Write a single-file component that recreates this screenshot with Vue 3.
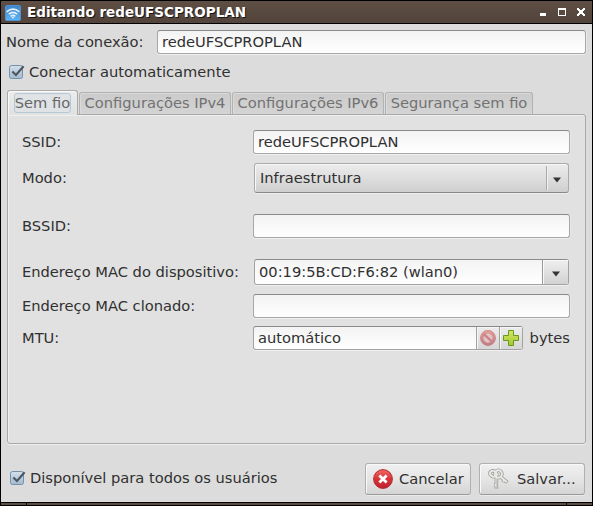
<script setup>
import { ref } from 'vue'

const title = 'Editando redeUFSCPROPLAN'
const tabs = [
  { id: 'wifi', label: 'Sem fio' },
  { id: 'ipv4', label: 'Configurações IPv4' },
  { id: 'ipv6', label: 'Configurações IPv6' },
  { id: 'sec', label: 'Segurança sem fio' },
]
const active = ref('wifi')
const autoConnect = ref(true)
const allUsers = ref(true)
</script>

<template>
  <div class="window">
    <header class="titlebar">
      <svg class="app-icon" width="16" height="16" viewBox="0 0 16 16">
        <defs>
          <linearGradient id="sky" x1="0" y1="0" x2="0" y2="1">
            <stop offset="0" stop-color="#3f83c8" />
            <stop offset="1" stop-color="#5eb4f4" />
          </linearGradient>
        </defs>
        <rect x="0.5" y="0.5" width="15" height="15" rx="1" fill="url(#sky)" stroke="#4b93d6" />
        <g fill="none" stroke="#e3f0fb" stroke-width="1.7">
          <path d="M1.6 6.8Q8 1.6 14.4 6.8" />
          <path d="M3.8 9.2Q8 5.6 12.2 9.2" />
          <path d="M5.7 11.3Q8 9.3 10.3 11.3" />
        </g>
        <path d="M6.6 12.2h2.8L8 13.8z" fill="#fff" />
      </svg>
      <h1 class="title">{{ title }}</h1>
      <svg class="controls" width="46" height="9" viewBox="0 0 46 9" shape-rendering="crispEdges">
        <rect x="0" y="5" width="6" height="3" fill="#fff" />
        <path d="M18 0h8v8h-8zM19 2v5h6V2z" fill="#fff" fill-rule="evenodd" />
        <path d="M37 0h2v1h1v1h2V1h1V0h2v2h-1v1h-1v2h1v1h1v2h-2V7h-1V6h-2v1h-1v1h-2V6h1V5h1V3h-1V2h-1z" fill="#fff" />
      </svg>
    </header>

    <main class="body">
      <div class="name-row">
        <span class="name-label">Nome da conexão:</span>
        <div class="entry name-entry">redeUFSCPROPLAN</div>
      </div>

      <div class="check auto" @click="autoConnect = !autoConnect">
        <svg class="box" width="16" height="16" viewBox="0 0 16 16">
          <defs>
            <linearGradient id="boxfill" x1="0" y1="0" x2="0" y2="1">
              <stop offset="0" stop-color="#d3e0ec" />
              <stop offset="1" stop-color="#a4bace" />
            </linearGradient>
          </defs>
          <rect x="0.5" y="1.5" width="13" height="13" rx="2" fill="url(#boxfill)" stroke="#7391aa" />
          <path v-if="autoConnect" d="M3.3 7.4L7 11L14.6 2.2" fill="none" stroke="#4b5660" stroke-width="2.1" />
        </svg>
        <span>Conectar automaticamente</span>
      </div>

      <nav class="tabs">
        <div
          v-for="t in tabs"
          :key="t.id"
          class="tab"
          :class="[t.id, { active: t.id === active }]"
          @click="active = t.id"
        >
          <span class="tab-text">{{ t.label }}</span>
        </div>
      </nav>

      <section class="pane">
        <span class="label">SSID:</span>
        <div class="entry">redeUFSCPROPLAN</div>

        <span class="label">Modo:</span>
        <div class="combo">
          <span class="combo-value">Infraestrutura</span>
          <span class="combo-arrow">
            <svg width="8" height="6" viewBox="0 0 8 6"><path d="M0 .5h8L4 5.5z" fill="#333" /></svg>
          </span>
        </div>

        <span class="label">BSSID:</span>
        <div class="entry"></div>

        <span class="label">Endereço MAC do dispositivo:</span>
        <div class="combo-entry">
          <span class="combo-text">00:19:5B:CD:F6:82 (wlan0)</span>
          <span class="drop">
            <svg width="8" height="6" viewBox="0 0 8 6"><path d="M0 .5h8L4 5.5z" fill="#333" /></svg>
          </span>
        </div>

        <span class="label">Endereço MAC clonado:</span>
        <div class="entry"></div>

        <span class="label">MTU:</span>
        <div class="mtu">
          <div class="spin">
            <span class="spin-text">automático</span>
            <span class="step">
              <svg width="16" height="16" viewBox="0 0 16 16">
                <defs>
                  <linearGradient id="ban" x1="0" y1="0" x2="0" y2="1">
                    <stop offset="0" stop-color="#e59a96" />
                    <stop offset="1" stop-color="#c07f8b" />
                  </linearGradient>
                </defs>
                <circle cx="8" cy="8" r="6.3" fill="#e0c6c6" stroke="#c5807f" stroke-width="3.2" />
                <circle cx="8" cy="8" r="6.3" fill="none" stroke="url(#ban)" stroke-width="2.2" />
                <path d="M3.8 4.2L12.2 11.8" stroke="#cc8487" stroke-width="2.4" />
              </svg>
            </span>
            <span class="step">
              <svg width="16" height="16" viewBox="0 0 16 16">
                <defs>
                  <linearGradient id="plus" x1="0" y1="0" x2="0" y2="1">
                    <stop offset="0" stop-color="#d2e668" />
                    <stop offset="1" stop-color="#a4c92c" />
                  </linearGradient>
                </defs>
                <path d="M5.5 .5h5v5h5v5h-5v5h-5v-5h-5v-5h5z" fill="url(#plus)" stroke="#679a1c" />
              </svg>
            </span>
          </div>
          <span class="unit">bytes</span>
        </div>
      </section>

      <footer class="actions">
        <div class="check" @click="allUsers = !allUsers">
          <svg class="box" width="16" height="16" viewBox="0 0 16 16">
            <rect x="0.5" y="1.5" width="13" height="13" rx="2" fill="url(#boxfill)" stroke="#7391aa" />
            <path v-if="allUsers" d="M3.3 7.4L7 11L14.6 2.2" fill="none" stroke="#4b5660" stroke-width="2.1" />
          </svg>
          <span>Disponível para todos os usuários</span>
        </div>
        <div class="buttons">
          <div class="button">
            <svg width="20" height="20" viewBox="0 0 20 20">
              <defs>
                <linearGradient id="stop" x1="0" y1="0" x2="0" y2="1">
                  <stop offset="0" stop-color="#ef6a66" />
                  <stop offset="0.5" stop-color="#d93338" />
                  <stop offset="1" stop-color="#bd2030" />
                </linearGradient>
              </defs>
              <circle cx="10" cy="10" r="9.4" fill="url(#stop)" stroke="#b52a31" stroke-width="1" />
              <path d="M6.4 6.4l7.2 7.2M13.6 6.4l-7.2 7.2" stroke="#fff" stroke-width="2.8" />
            </svg>
            <span class="cancel-text">Cancelar</span>
          </div>
          <div class="button save">
            <svg width="22" height="22" viewBox="0 0 22 22" fill="none">
              <g stroke="#a0a19d" stroke-width="3.6">
                <ellipse cx="6.4" cy="5.8" rx="3.6" ry="2.8" transform="rotate(25 6.4 5.8)" />
                <path d="M13.5 8.8L20.4 14.4M16.8 12.4l-1 1.8" />
                <path d="M9.4 10V20.6M9.4 17.2H7" />
                <ellipse cx="11.4" cy="6" rx="3.5" ry="3.7" />
              </g>
              <g stroke="#eaebe7" stroke-width="1.9">
                <ellipse cx="6.4" cy="5.8" rx="3.6" ry="2.8" transform="rotate(25 6.4 5.8)" />
                <path d="M13.5 8.8L19.8 13.9M16.8 12.4l-.7 1.2" />
                <path d="M9.4 10V19.8M9.4 17.2H7.6" />
                <ellipse cx="11.4" cy="6" rx="3.5" ry="3.7" />
              </g>
              <path d="M9.8 10.5V20" stroke="#a9aaa6" stroke-width=".7" />
            </svg>
            <span>Salvar...</span>
          </div>
        </div>
      </footer>
    </main>
    <div class="grip"></div>
  </div>
</template>

<style>
body {
  margin: 0;
  background: #000;
}
</style>

<style scoped>
.window {
  box-sizing: border-box;
  width: 593px;
  height: 506px;
  border: 1px solid #000;
  display: flex;
  flex-direction: column;
  background: #dcdcdc;
  font-family: "DejaVu Sans", sans-serif;
  font-size: 14.67px;
  line-height: 18px;
  color: #303030;
  white-space: nowrap;
  cursor: default;
}
.titlebar {
  box-sizing: border-box;
  height: 23px;
  flex: none;
  display: flex;
  align-items: center;
  padding: 0 6px 0 4px;
  border-bottom: 1px solid #000;
  background: linear-gradient(#5e4e44, #52443b);
}
.app-icon {
  margin-top: 1px;
}
.title {
  flex: 1;
  margin: 0 0 1px 6px;
  font-size: 13.52px;
  line-height: 18px;
  font-weight: bold;
  color: #fff;
  text-shadow: 1px 1px 0 #1c1512;
}
.controls {
  flex: none;
}
.body {
  flex: 1;
  min-height: 0;
  display: flex;
  flex-direction: column;
  padding: 6px 6px 0;
}
.name-row {
  display: flex;
  align-items: center;
}
.name-label {
  width: 151px;
  margin-left: -1px;
}
.entry {
  box-sizing: border-box;
  height: 24px;
  border: 1px solid #a8a8a8;
  border-top-color: #8a8a8a;
  border-radius: 3px;
  padding: 2px 4px 0;
  background: linear-gradient(#f3f3f3, #fff);
  box-shadow: 0 1px 0 #f0f0f0, 1px 0 0 #e8e8e8;
}
.name-entry {
  flex: none;
  width: 429px;
}
.check {
  display: flex;
  align-items: center;
  gap: 4px;
}
.auto {
  height: 18px;
  margin: 9px 0 0 2px;
}
.box {
  flex: none;
}
.tabs {
  display: flex;
  align-items: flex-end;
  gap: 1px;
  height: 25px;
  margin-top: 9px;
  position: relative;
}
.tab {
  box-sizing: border-box;
  height: 22px;
  margin-bottom: 1px;
  display: flex;
  justify-content: center;
  border: 1px solid #b2b2b2;
  border-bottom: 0;
  border-radius: 3px 3px 0 0;
  background: linear-gradient(#cbcbcb, #d4d4d4);
  box-shadow: inset 1px 1px 0 #dadada;
  color: #727272;
}
.ipv4, .ipv6 {
  width: 152px;
}
.sec {
  width: 148px;
}
.wifi {
  width: 71px;
}
.active {
  height: 25px;
  margin-bottom: 0;
  padding-top: 1px;
  background: linear-gradient(#ececec, #e1e1e1);
  box-shadow: inset 1px 1px 0 #f8f8f8;
  border-color: #aaa;
  color: #666;
}
.tab-text {
  height: 19px;
  line-height: 20px;
}
.active .tab-text {
  box-sizing: border-box;
  display: flex;
  justify-content: center;
  width: 57px;
  height: 20px;
  margin-top: 1px;
  line-height: 17px;
  border: 1px solid #b5c8d6;
  border-radius: 3px;
  background: #dfe3e6;
}
.pane {
  box-sizing: border-box;
  flex: none;
  height: 330px;
  width: 579px;
  margin-top: -1px;
  border: 1px solid #a9a9a9;
  border-radius: 0 3px 3px 3px;
  background: #e1e1e1;
  box-shadow: inset 1px 1px 0 #efefef, 0 1px 0 #efefef;
  padding: 15px 15px 0 14px;
  display: grid;
  grid-template-columns: 231px 317px;
  grid-template-rows: 24px 48px 48px 44px 24px 40px;
  align-content: start;
  align-items: center;
}
.label {
  line-height: 18px;
}
.combo {
  box-sizing: border-box;
  height: 30px;
  margin: 0 1px;
  display: flex;
  align-items: center;
  border: 1px solid #ababab;
  border-bottom-color: #888;
  border-radius: 3px;
  background: linear-gradient(#ececec, #dedede 50%, #cfcfcf);
  box-shadow: inset 1px 1px 0 #f7f7f7, 0 1px 0 #eee;
}
.combo-value {
  flex: 1;
  padding-left: 5px;
}
.combo-arrow {
  width: 22px;
  height: 24px;
  display: grid;
  place-items: center;
  padding: 3px 2px 0 0;
  box-sizing: border-box;
  border-left: 1px solid #aaa;
  box-shadow: inset 1px 0 0 #f1f1f1;
}
.combo-entry {
  box-sizing: border-box;
  height: 26px;
  margin: 0 1px;
  display: flex;
  border: 1px solid #a2a2a2;
  border-top-color: #8a8a8a;
  border-radius: 3px;
  background: linear-gradient(#f3f3f3, #fff);
  box-shadow: 0 1px 0 #f0f0f0;
}
.combo-text {
  flex: 1;
  padding: 3px 0 0 4px;
}
.drop {
  box-sizing: border-box;
  width: 26px;
  padding-top: 3px;
  display: grid;
  place-items: center;
  border-left: 1px solid #999;
  background: linear-gradient(#efefef, #d2d2d2);
  box-shadow: inset 1px 1px 0 #f9f9f9;
}
.mtu {
  display: flex;
  align-items: center;
  gap: 7px;
}
.spin {
  box-sizing: border-box;
  width: 270px;
  height: 24px;
  display: flex;
  border: 1px solid #a2a2a2;
  border-top-color: #8a8a8a;
  border-radius: 3px;
  background: linear-gradient(#f3f3f3, #fff);
  box-shadow: 0 1px 0 #f0f0f0;
}
.spin-text {
  flex: 1;
  padding: 2px 0 0 4px;
}
.step {
  box-sizing: border-box;
  width: 23px;
  display: grid;
  place-items: center;
  border-left: 1px solid #a2a2a2;
  background: linear-gradient(#ececec, #d6d6d6);
  box-shadow: inset 1px 1px 0 #f6f6f6;
}
.actions {
  display: flex;
  align-items: center;
  justify-content: space-between;
  margin-top: 19px;
  padding: 0 1px 0 3px;
}
.actions .check {
  margin-top: -2px;
}
.buttons {
  display: flex;
  gap: 8px;
}
.button {
  box-sizing: border-box;
  width: 106px;
  height: 32px;
  display: flex;
  align-items: center;
  padding-left: 7px;
  gap: 6px;
  border: 1px solid #b0b0b0;
  border-bottom-color: #999;
  border-radius: 3px;
  background: linear-gradient(#f0f0f0, #e5e5e5 50%, #d5d5d5);
  box-shadow: inset 1px 1px 0 #f9f9f9, 0 1px 0 #ebebeb;
}
.save {
  gap: 8px;
}
.grip {
  flex: none;
  box-sizing: border-box;
  height: 3px;
  border-top: 1px solid #000;
  background: linear-gradient(90deg, #5c4d43 25px, #000 25px, #000 26px, #5c4d43 26px, #5c4d43 565px, #000 565px, #000 566px, #5c4d43 566px);
}
</style>
